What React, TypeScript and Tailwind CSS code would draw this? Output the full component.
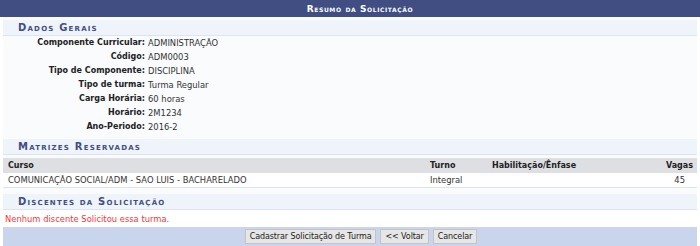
export default function App() {
  const rows: [string, string][] = [
    ["Componente Curricular:", "ADMINISTRAÇÃO"],
    ["Código:", "ADM0003"],
    ["Tipo de Componente:", "DISCIPLINA"],
    ["Tipo de turma:", "Turma Regular"],
    ["Carga Horária:", "60 horas"],
    ["Horário:", "2M1234"],
    ["Ano-Periodo:", "2016-2"],
  ];
  const sub = "h-[16px] bg-[#EFF3FA] border-b border-[#DCE4F2] flex items-center pl-[15px] text-[#404E82] font-bold [font-variant:small-caps] text-[10px] tracking-[1.2px] whitespace-nowrap";
  const btn = "h-[15px] px-[4px] bg-[#E6E6E6] border border-[#C4C4C4] text-[#222] text-[8px] leading-[13px] tracking-[-0.1px] whitespace-nowrap";
  const reg = "text-[8.4px]";
  return (
    <div className="w-[700px] h-[246px] bg-white overflow-hidden text-[8px] leading-[14px] text-[#222]" style={{ fontFamily: '"DejaVu Sans", Verdana, sans-serif' }}>
      <div className="h-[17px] bg-[#404E82] flex items-center justify-center pl-[20px] text-white font-bold [font-variant:small-caps] text-[9px] tracking-[0.6px]">
        Resumo da Solicitação
      </div>
      <div className="mx-[3px] bg-[#F9FBFD] h-[229px] flex flex-col">
        <div className={"mt-[3px] " + sub}>Dados Gerais</div>
        <div className="flex flex-col">
          {rows.map(([l, v]) => (
            <div key={l} className="flex h-[14px] items-center whitespace-nowrap">
              <div className="w-[142px] text-right font-bold text-[#222]">{l}</div>
              <div className={"pl-[3px] text-[#333] " + reg}>{v}</div>
            </div>
          ))}
        </div>
        <div className={"mt-[5px] " + sub}>Matrizes Reservadas</div>
        <div className="mt-[3px] h-[15px] bg-[#DEDFE3] flex items-center font-bold text-[#222] whitespace-nowrap">
          <div className="w-[427px] pl-[5px]">Curso</div>
          <div className="w-[62px]">Turno</div>
          <div className="flex-1">Habilitação/Ênfase</div>
          <div className="pr-[4px]">Vagas</div>
        </div>
        <div className={"h-[15px] bg-white border-b border-[#DDE3EC] flex items-center text-[#333] whitespace-nowrap " + reg}>
          <div className="w-[427px] pl-[5px]">COMUNICAÇÃO SOCIAL/ADM - SAO LUIS - BACHARELADO</div>
          <div className="w-[62px]">Integral</div>
          <div className="flex-1"></div>
          <div className="pr-[12px]">45</div>
        </div>
        <div className={"mt-[6px] " + sub}>Discentes da Solicitação</div>
        <div className={"h-[17px] bg-white flex items-center pl-[2px] text-[#F33] " + reg}>
          Nenhum discente Solicitou essa turma.
        </div>
        <div className="flex-1 bg-[#C8D5EC] flex items-center justify-center gap-[4px] pl-[22px]">
          <button className={btn}>Cadastrar Solicitação de Turma</button>
          <button className={btn}>&lt;&lt; Voltar</button>
          <button className={btn}>Cancelar</button>
        </div>
      </div>
    </div>
  );
}
